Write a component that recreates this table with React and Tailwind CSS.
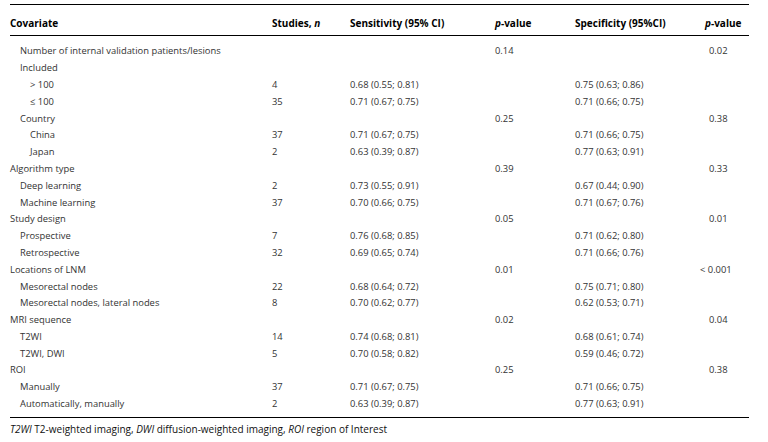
import React from "react";

const rows = [
  { label: "Number of internal validation patients/lesions", indent: 1, p1: "0.14", p2: "0.02" },
  { label: "Included", indent: 1 },
  { label: "> 100", indent: 2, n: "4", sens: "0.68 (0.55; 0.81)", spec: "0.75 (0.63; 0.86)" },
  { label: "≤ 100", indent: 2, n: "35", sens: "0.71 (0.67; 0.75)", spec: "0.71 (0.66; 0.75)" },
  { label: "Country", indent: 1, p1: "0.25", p2: "0.38" },
  { label: "China", indent: 2, n: "37", sens: "0.71 (0.67; 0.75)", spec: "0.71 (0.66; 0.75)" },
  { label: "Japan", indent: 2, n: "2", sens: "0.63 (0.39; 0.87)", spec: "0.77 (0.63; 0.91)" },
  { label: "Algorithm type", indent: 0, p1: "0.39", p2: "0.33" },
  { label: "Deep learning", indent: 1, n: "2", sens: "0.73 (0.55; 0.91)", spec: "0.67 (0.44; 0.90)" },
  { label: "Machine learning", indent: 1, n: "37", sens: "0.70 (0.66; 0.75)", spec: "0.71 (0.67; 0.76)" },
  { label: "Study design", indent: 0, p1: "0.05", p2: "0.01" },
  { label: "Prospective", indent: 1, n: "7", sens: "0.76 (0.68; 0.85)", spec: "0.71 (0.62; 0.80)" },
  { label: "Retrospective", indent: 1, n: "32", sens: "0.69 (0.65; 0.74)", spec: "0.71 (0.66; 0.76)" },
  { label: "Locations of LNM", indent: 0, p1: "0.01", p2: "< 0.001" },
  { label: "Mesorectal nodes", indent: 1, n: "22", sens: "0.68 (0.64; 0.72)", spec: "0.75 (0.71; 0.80)" },
  { label: "Mesorectal nodes, lateral nodes", indent: 1, n: "8", sens: "0.70 (0.62; 0.77)", spec: "0.62 (0.53; 0.71)" },
  { label: "MRI sequence", indent: 0, p1: "0.02", p2: "0.04" },
  { label: "T2WI", indent: 1, n: "14", sens: "0.74 (0.68; 0.81)", spec: "0.68 (0.61; 0.74)" },
  { label: "T2WI, DWI", indent: 1, n: "5", sens: "0.70 (0.58; 0.82)", spec: "0.59 (0.46; 0.72)" },
  { label: "ROI", indent: 0, p1: "0.25", p2: "0.38" },
  { label: "Manually", indent: 1, n: "37", sens: "0.71 (0.67; 0.75)", spec: "0.71 (0.66; 0.75)" },
  { label: "Automatically, manually", indent: 1, n: "2", sens: "0.63 (0.39; 0.87)", spec: "0.77 (0.63; 0.91)" },
];

const indents = ["pl-0", "pl-[10px]", "pl-[20px]"];
const cols = "grid grid-cols-[262px_78px_145px_80px_134px_40px]";

export default function App() {
  return (
    <div className="w-[768px] h-[442px] bg-white text-[#333] text-[9.4px] pt-[4px] pl-[10px]" style={{ fontFamily: '"Open Sans", sans-serif' }}>
      <div className="w-[739px] border-t-[1.5px] border-black">
        <div className={`${cols} items-center h-[31px] pt-[6px] text-[10px] font-bold text-black border-b-[1.5px] border-black`}>
          <div>Covariate</div>
          <div>Studies, <i>n</i></div>
          <div>Sensitivity (95% CI)</div>
          <div><i>p</i>-value</div>
          <div>Specificity (95%CI)</div>
          <div className="-ml-[4px]"><i>p</i>-value</div>
        </div>
        <div className="pt-[7px] pb-[4px] border-b-[1.5px] border-black">
          {rows.map((r, i) => (
            <div key={i} className={`${cols} items-center h-[16.8px] whitespace-nowrap`}>
              <div className={indents[r.indent]}>{r.label}</div>
              <div>{r.n}</div>
              <div>{r.sens}</div>
              <div>{r.p1}</div>
              <div>{r.spec}</div>
              <div className={r.p2 === "< 0.001" ? "-ml-[9px]" : ""}>{r.p2}</div>
            </div>
          ))}
        </div>
      </div>
      <div className="pt-[4px] text-[10px] text-[#111]">
        <i>T2WI</i> T2-weighted imaging, <i>DWI</i> diffusion-weighted imaging, <i>ROI</i> region of Interest
      </div>
    </div>
  );
}
